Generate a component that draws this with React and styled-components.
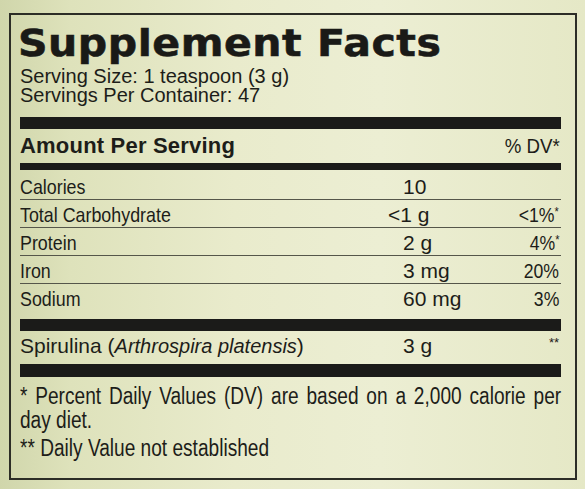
import React from 'react';
import styled, { createGlobalStyle } from 'styled-components';

const GlobalStyle = createGlobalStyle`
  html, body {
    margin: 0;
    padding: 0;
  }
  body {
    width: 585px;
    height: 489px;
    overflow: hidden;
    background: linear-gradient(90deg, #d0d6ab 0%, #dee2bb 12%, #e9ebcc 40%, #eceed3 65%, #e5e8c6 100%);
    color: #1d1d19;
    font-family: "Liberation Sans", Arial, sans-serif;
  }
`;

const nutrients = [
  { name: 'Calories', amount: '10', dv: '' },
  { name: 'Total Carbohydrate', amount: '<1 g', dv: '<1%', star: true, hang: true },
  { name: 'Protein', amount: '2 g', dv: '4%', star: true },
  { name: 'Iron', amount: '3 mg', dv: '20%' },
  { name: 'Sodium', amount: '60 mg', dv: '3%' },
];

// the label is set in a condensed face; we squeeze Liberation Sans instead
const App = () => (
  <>
    <GlobalStyle />
    <Page>
      <Label>
        <Title>Supplement Facts</Title>
        <ServingInfo>
          <div>Serving Size: 1 teaspoon (3 g)</div>
          <div>Servings Per Container: 47</div>
        </ServingInfo>
        <Bar $h={12} $top={12} />
        <HeaderRow>
          <span>Amount Per Serving</span>
          <Squeeze $k={0.89} $right>% DV*</Squeeze>
        </HeaderRow>
        <Bar $h={7} />
        <Rows>
          {nutrients.map((n, i) => (
            <Row key={n.name} $last={i === nutrients.length - 1}>
              <Name>
                <Squeeze $k={0.85}>{n.name}</Squeeze>
              </Name>
              <Amount $hang={n.hang}>{n.amount}</Amount>
              <Dv>
                <Squeeze $k={0.84} $right>
                  {n.dv}
                  {n.star && <Star>*</Star>}
                </Squeeze>
              </Dv>
            </Row>
          ))}
        </Rows>
        <Bar $h={12} />
        <Row $single>
          <Name>
            Spirulina (<i>Arthrospira platensis</i>)
          </Name>
          <Amount>3 g</Amount>
          <Dv>
            <Star>**</Star>
          </Dv>
        </Row>
        <Bar $h={13} />
        <Footnotes>
          <p>* Percent Daily Values (DV) are based on a 2,000 calorie per day diet.</p>
          <p>** Daily Value not established</p>
        </Footnotes>
      </Label>
    </Page>
  </>
);

export default App;

const Page = styled.div`
  padding: 13px 8px 8px 9px;
`;

const Label = styled.div`
  border: 2px solid #2c2d26;
  padding: 0 14px 20px 9px;
  height: 467px;
  box-sizing: border-box;
`;

const Title = styled.h1`
  margin: 0 0 0 -2px;
  padding-top: 8px;
  font-family: "DejaVu Sans", "Liberation Sans", sans-serif;
  font-weight: 900;
  font-size: 38px;
  line-height: 40px;
  letter-spacing: 0.5px;
  color: #1a1a17;
  -webkit-text-stroke: 0.6px #1a1a17;
  white-space: nowrap;
  transform: scaleX(1.08);
  transform-origin: left center;
`;

const Squeeze = styled.span`
  display: inline-block;
  white-space: nowrap;
  transform: scaleX(${({ $k }) => $k});
  transform-origin: ${({ $right }) => ($right ? 'right' : 'left')} center;
`;

const ServingInfo = styled.div`
  margin-top: 4px;
  font-size: 20px;
  line-height: 19px;
  white-space: nowrap;
`;

const Bar = styled.div`
  height: ${({ $h }) => $h}px;
  margin-top: ${({ $top }) => $top || 0}px;
  background: #1b1b19;
`;

const HeaderRow = styled.div`
  display: flex;
  justify-content: space-between;
  align-items: baseline;
  font-weight: 700;
  font-size: 22px;
  line-height: 33px;
  letter-spacing: 0.2px;
  margin-bottom: 1px;
  padding-right: 1px;

  ${Squeeze} {
    font-weight: 400;
    font-size: 21px;
    letter-spacing: 0;
  }
`;

const Rows = styled.div`
  padding-top: 2px;
`;

const Row = styled.div`
  display: grid;
  grid-template-columns: 383px 1fr auto;
  align-items: baseline;
  padding-top: 3px;
  padding-bottom: ${({ $last, $single }) => ($last ? 8 : $single ? 6 : 0)}px;
  line-height: 24px;
  font-size: 21px;
  border-bottom: ${({ $last, $single }) => ($last || $single ? 'none' : '1.5px solid #55564a')};
`;

const Name = styled.span`
  white-space: nowrap;

  i {
    font-size: 20px;
  }
`;

const Amount = styled.span`
  font-size: 21px;
  margin-left: ${({ $hang }) => ($hang ? '-15px' : '0')};
`;

const Dv = styled.span`
  text-align: right;
  padding-right: 2px;
`;

const Star = styled.span`
  position: relative;
  top: -6px;
  font-size: 13px;
  line-height: 0;
`;

const Footnotes = styled.div`
  width: 652px;
  transform: scaleX(0.83);
  transform-origin: left top;
  font-size: 23px;
  line-height: 24px;

  p {
    margin: 4px 0 0;
    text-align: justify;
  }

  p:first-child {
    margin-top: 7px;
  }
`;
